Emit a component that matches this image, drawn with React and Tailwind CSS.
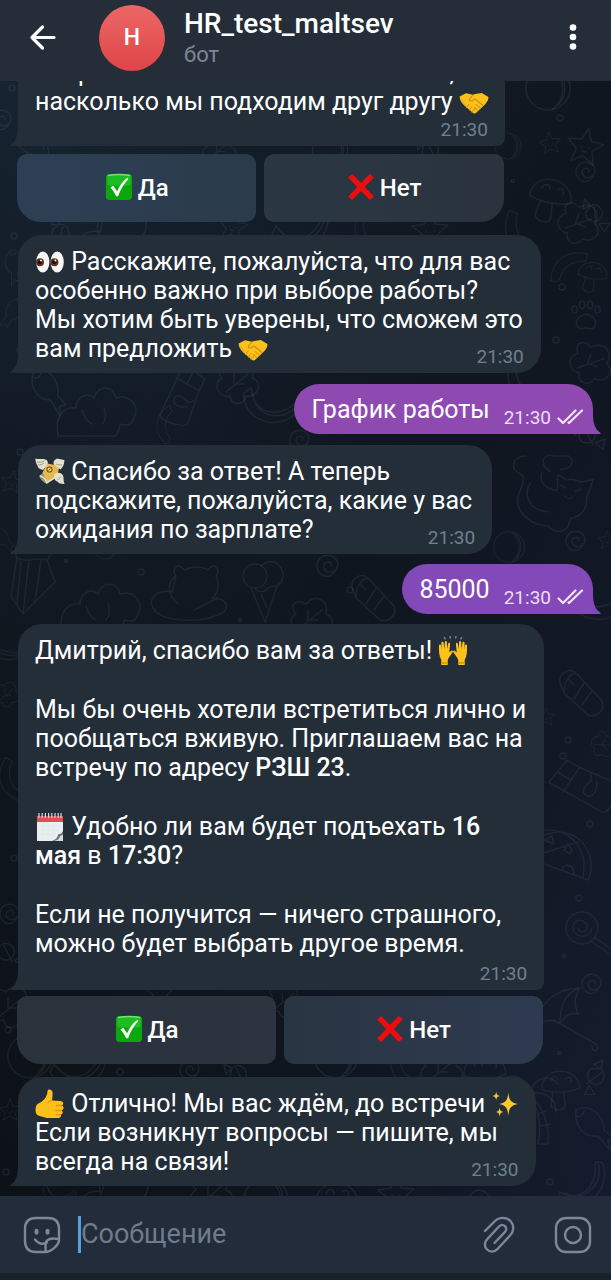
import React from "react";

/* ---------- emoji drawings ---------- */

function Emoji({ label, children, className = "h-[30px] w-[30px]" }) {
  return (
    <svg role="img" aria-label={label} viewBox="0 0 30 30" className={`-mt-[5px] -mb-[3px] inline-block shrink-0 align-middle ${className}`}>
      {children}
    </svg>
  );
}

function Handshake() {
  return (
    <Emoji label="Рукопожатие">
      <path d="M0.6 9.500 7 6.200l7 1.600 2.300-.9 6.500-1 6.600 4.200c.4 3-2.300 6.300-4.500 8.500L17.500 25.600c-1.500 1.300-3 1.100-4-.2L4.800 18C2.200 15.400.8 12.500.6 9.500z" fill="#fcc21b" />
      <path d="M14 7.800 10.500 12c-.7 1.900 1.700 2.700 3.400 1.300l2-1.400 7.800 6.300" fill="none" stroke="#c98a10" strokeWidth="1.100" strokeLinecap="round" />
      <path d="M7.500 20.500l2.600-3.300M10.300 22.800l2.700-3.300M13 25l2.600-3.200M17.200 17.600l4.400 3.600M15.500 20.500l3.400 2.900" stroke="#d9960f" strokeWidth="1.100" strokeLinecap="round" />
      <path d="M1 12c3.500 1.500 4 4.500 5 6.800" fill="none" stroke="#e8a413" strokeWidth="1" />
    </Emoji>
  );
}

function Eyes() {
  return (
    <Emoji label="Глаза">
      <ellipse cx="7.800" cy="15" rx="6.600" ry="10.500" fill="#f7f7f7" />
      <ellipse cx="22.200" cy="15" rx="6.600" ry="10.500" fill="#f7f7f7" />
      <circle cx="5" cy="15.200" r="4" fill="#5f3322" />
      <circle cx="19.400" cy="15.200" r="4" fill="#5f3322" />
      <circle cx="4.800" cy="15.200" r="2" fill="#17100d" />
      <circle cx="19.200" cy="15.200" r="2" fill="#17100d" />
      <circle cx="6" cy="13.500" r=".9" fill="#fff" />
      <circle cx="20.400" cy="13.500" r=".9" fill="#fff" />
    </Emoji>
  );
}

function WingedMoney() {
  return (
    <Emoji label="Деньги с крыльями">
      <path d="M8.500 15.500 4 18.800c1 3.700 4 6.500 7.800 8.200L22 20z" fill="#8b9476" />
      <path d="M12.500 6.500 24.500 9 22 20.500 12 25 7.500 15.500z" fill="#e3b94f" />
      <path d="M5 19c3.500.5 5.500 3.500 6.800 6.700l9-5.500" fill="none" stroke="#e5e2cf" strokeWidth="1.500" />
      <circle cx="14.500" cy="12.500" r="4.200" fill="#f1cd62" />
      <circle cx="14.500" cy="12.500" r="2.600" fill="none" stroke="#7b5a20" strokeWidth="1.200" />
      <path d="M13.500 13.500l2-2" stroke="#7b5a20" strokeWidth="1" />
      <path d="M.5 1.500c4 1.300 8-.4 11 1.500 1.700 1.200 1.700 3.500.5 5.200l-4 4.800C4.500 12 2.500 10.500 2.500 8.500 1 6.500.3 4 .5 1.500zM29.500 3c-3.500-.2-6.500-2-9-.6-2 1.100-2.300 3.300-1.700 5l6.700 5c2.200-1.700 3.800-5.200 4-9.400zM19 17.500c3.300-2.700 7-2 8.700.6 1.500 2.400.3 6.200 2 8.900-3.700 0-6.200-.6-7.200-2.400-2.700-.5-3.500-3.600-3.500-7.100z" fill="#e5e0cb" />
      <path d="M3 8c2.500.1 4.300-.6 6-2M2 5c2.500.4 5 .1 7-.7M21 7c2 1 4 1.200 6 .7M22.500 22.500c1.500-.4 2.700-1.400 3.300-3" stroke="#a39c84" fill="none" />
    </Emoji>
  );
}

function RaisedHands() {
  return (
    <Emoji label="Поднятые руки">
      <path d="M6.200 1l1.300 2.500M12 0l.5 2.500M18 0l-.5 2.500M23.800 1l-1.300 2.500" stroke="#72818d" strokeWidth="1.500" />
      <path id="raised-left" d="M1 9.500c.1-1.500 1.900-1.500 2.100 0L3.600 14 3.400 7c0-1.600 2-1.700 2.200-.1L6.500 13 6.800 6.200c.1-1.500 2-1.500 2.100 0L9.100 13l1-5.300c.4-1.500 2.200-1.100 2 .4l-.8 8.400 1.800-1.700c1.300-1 2.300.2 1.500 1.400L11 21.500c-.6 1.200-1.300 2-1.300 3V29H3.300v-5C1.200 20.500.7 15 1 9.500z" fill="#fcc21b" />
      <use href="#raised-left" transform="translate(30 0) scale(-1 1)" />
      <path d="M3.300 27h6.400M20.300 27h6.400" stroke="#e39a12" strokeWidth="2" />
    </Emoji>
  );
}

function Calendar() {
  return (
    <Emoji label="Календарь">
      <path d="M2 4h26v25H2z" fill="#eceff0" />
      <path d="M2 4h26v6H2z" fill="#d75257" />
      <path d="M4 1v5M7.200 1v5M10.400 1v5M13.600 1v5M16.800 1v5M20 1v5M23.200 1v5M26 1v5" stroke="#cfd8dc" strokeWidth="1.200" />
      <path d="M5 14h20M5 18h20M5 22h16M8 11v16M13 11v16M18 11v14" stroke="#dfe4e7" strokeWidth=".8" />
      <path d="M28 19v10H16.500c5-1.500 6-3.500 6.500-6.500 2.500-.3 4-1.500 5-3.500z" fill="#65727b" />
      <path d="M28 22v7h-9c4-1 5.500-2.500 6-5 1.500-.3 2.500-1 3-2z" fill="#d4dade" />
    </Emoji>
  );
}

function ThumbsUp() {
  return (
    <Emoji label="Большой палец вверх">
      <path d="M13.500.6c2.200-.6 4 .8 4.100 3.200.1 2.600-.4 5.200-.5 7.700l8.200.4c3.300.1 3.800 3.700 1.500 4.600 2.600.8 2.200 4.300-.3 4.900 2 1 1.400 3.800-.9 4.200 1.100 1.500.1 3.300-2 3.400H14c-3 0-5.200-1-7.500-1.600-3.800-.7-5.800-2.200-5.900-5.700-.2-3.200.5-6.100 2.900-7.100C8 12.400 11 9 12.100 5c.4-1.600.2-3.700 1.400-4.400z" fill="#fcc21b" />
      <path d="M26.500 16.500h-5.200M26.300 21.500h-5.400M25.300 25.600h-4.300M16.700 11.600c-1.500.2-3 .8-3.700 1.700" stroke="#df9810" strokeWidth="1.300" strokeLinecap="round" fill="none" />
    </Emoji>
  );
}

function Sparkles() {
  return (
    <Emoji label="Искры" className="h-[28px] w-[28px]">
      <path d="M17.500 3c1 8.200 2.500 10.500 10.500 12-8 1.500-9.500 4-10.500 12.500C16.500 19 15 16.500 7.500 15 15 13.500 16.500 11.200 17.500 3z" fill="#fdc72e" />
      <path d="M4.500 1.500c.4 3.300 1.300 4.300 4.200 4.800-2.900.5-3.800 1.500-4.200 5-.4-3.500-1.300-4.500-4.200-5 2.900-.5 3.800-1.500 4.200-4.800zM8.200 19c.4 3.200 1.400 4 4.100 4.500-2.700.5-3.700 1.500-4.100 5-.4-3.500-1.400-4.500-4.100-5 2.700-.5 3.700-1.300 4.100-4.500z" fill="#f6c445" />
    </Emoji>
  );
}

function CheckMark() {
  return (
    <Emoji label="Галочка" className="h-[28px] w-[28px]">
      <rect x="1" y="1" width="28" height="28" rx="4" fill="#0aa80a" />
      <rect x="2.500" y="1.500" width="25" height="12" rx="3" fill="#1cbd22" />
      <path d="M3 2.800c7-1.300 17-1.300 24 0" stroke="#74e479" strokeWidth="1.500" fill="none" />
      <path d="M5.800 15.500l3-1.800 4.200 5.800C15.500 13.500 19 8.800 24 5l1 1.500c-5 5.500-8.500 11.500-11 18.500h-2c-1.500-3.500-3.500-6.500-6.200-9.500z" fill="#fff" />
    </Emoji>
  );
}

function CrossMark() {
  return (
    <Emoji label="Крестик" className="h-[28px] w-[28px]">
      <path d="M5.500 1 15 10.600 24.500 1l4.300 3.800L19 15l9.800 10.200-4.300 3.800L15 19.400 5.500 29l-4.300-3.800L11 15 1.200 4.800z" fill="#ee0c0c" />
    </Emoji>
  );
}

/* ---------- wallpaper ---------- */

const SHAPES = {
  star: <path d="M0-18 5-6l13 1L8 4l4 13L0 10-11 17-8 4-18-4-5-6zM-4 1v1M4 1v1M-2 5q2 2 4 0" />,
  planet: (
    <g>
      <circle r="22" />
      <path d="M4-21C18-8 18 10 5 21M10-18c9 10 9 26 0 35" />
    </g>
  ),
  spiral: <path d="M7 4C2 14-11 9-10-1-9-12 7-13 9-2 9 6-2 9-4 1-4-5 4-5 3 0" />,
  ring: <circle r="3" />,
  dot: <circle r="1.500" />,
  cone: (
    <g>
      <circle cx="-8" cy="-14" r="12" />
      <path d="M-2-24C10-36 26-20 18-8 12 0 8-6 5-2 0 4-6 2-8-2M-12-2 2 32 14-4M-2 4l6 14" />
    </g>
  ),
  popcorn: <path d="M-16-14c-4-8 4-14 10-10 2-8 14-6 14 0 8-2 12 6 6 12L22 10-10 42-22 24zM-16-14C-6-8 4-16 14-12M-10 42-4-12M-16 32-12-10M2 30l6-42" />,
  bush: <path d="M-38 28c-4-20 6-30 18-28 0-12 12-16 18-10 4-14 20-12 22 0 14-4 24 8 18 20-2 8-8 8-14 6 0 6-2 8-4 12zM-14 2c2 8 6 12 10 14M8 0c2 6 2 12-2 16" />,
  bear: <path d="M-14-20c-6-8 4-14 8-6 8-4 18-4 24 0 4-8 14-2 8 6 4 10 2 18-4 22 12 0 18 6 12 14C14 28-22 26-34 16-46 4-32-8-18-4-16-10-16-14-14-20zM-12 8C-24-2-22-16-14-20M4 14 28 2" />,
  cat: <path d="M-30-26c-14 2-14 16-4 18 8 2 4 12 2 22-2 18 18 28 34 26 12 10 22 0 20-10 12-4 16-12 14-24l4-18-12 4c-6-2-10-2-14 0l-10-4 2 16c-12 0-20-6-18-16M-4-14C-16-20-14-32-2-30l14-2c8 4 4 14-6 14M8-2l6 2M24 2l6-3M14 8q4 4 8 0M-22 0c-6 14 4 28 22 26" />,
  paw: <path d="M-9 8C-12 0-4-3 0-4c4 1 12 4 9 12-3 5-6 2-9 2s-6 3-9-2zM-11-5c-4 0-4-6-1-7s5 6 1 7zM-4-9c-4-1-3-8 0-8s4 7 0 8zM4-9c-4-1-3-8 0-8s4 7 0 8zM11-5c-4-1-2-8 1-7s3 7-1 7z" />,
  hook: <path d="M-6-32c-10 24-4 50 28 58 6-8 2-14-6-16C4 2 0-14 4-28z" />,
  torch: <path d="M-22-12C-24-22-12-28-6-22L20 6c4 8-6 18-14 14L-18-2zM-6-22C-14-20-18-12-18-2M2-12-8 4M10-4 0 10M-14-16l6 6" />,
  tube: <path d="M-30 8-18-18-4-14 34-8c6 0 4 30-4 32zM-4-14-14 14M-24-4l14 4M8-10c8 8-6 10-2 20 8 6 14-4 10-14" />,
  pizza: <path d="M-30 18C-34-22 20-36 34 4 36 14 36 20 32 28L-28 6M-30-14C-12-30 24-22 28 10 28 16 28 22 27 26M-28 6C-10 6-10-16-28-14M-28 6 22-10M-12-12l8-4 2 8zM8-2l4-6 4 6-2 4zM6 18c2-8 12-6 12 4" />,
  lolly: (
    <g>
      <circle r="16" />
      <path d="M10 0C8 12-10 10-9-1-8-11 6-9 5 0 4 5-4 5-4 0M13 10l24 16M10 14l24 16" />
    </g>
  ),
  umbrella: <path d="M-30 8C-28-14-10-30 14-30 8-20 8-14 12-4 4-6-2-2-6 6-14 0-22 2-30 8zM-12 2 30 26c6 6-4 10-4 2M14-30C0-26-6-14-6 6" />,
  fish: <path d="M-20-18C-6-26 8-12 8 2l10 8-6 2 2 10-12-14C-12 10-22-2-20-18zM-14-14h1M-20-12c6 2 8-2 8-6" />,
  leaf: <path d="M-4-14C6-26 20-16 16-4 28 0 22 16 10 14c-2 10-16 10-16 0-12 2-18-12-8-18-8-8 0-16 10-10zM-10 10 12-8M-2 2V-8M0 2h8" />,
  candy: <path d="M-8-6c6-6 16 0 14 8-2 8-14 8-16 0zM-8-6l-8-4 2 10zM6 8l8 6 2-10zM-4-6 4 10" />,
  banana: <path d="M-24 0C-12 18 10 18 22-8l6 4C24 24-14 34-28 8zM-20 4C-6 22 16 16 24-4" />,
  mushroom: <path d="M-20 4C-22-22 20-24 22 2 10 8-8 8-20 4zM-8 6l-2 16c4 6 14 6 16 0L4 6M-10-6c2-6 8-6 8 0M6-8c4-4 8 0 6 4" />,
  palm: <path d="M0 0c-16-10-28-4-30 8M0 0c-14 0-20 12-16 22M0 0C-4-18-18-22-28-14M0 0C4-18 20-20 28-10M0 0c14-4 26 4 26 18M0 0c8 14 12 34 8 50h10C20 30 12 12 0 0M8 20l8-3M10 32l10-2" />,
};

const DOODLES = [
  ["planet", 548, 88], ["star", 585, 146, 12], ["star", 550, 143, -8, 0.6], ["ring", 560, 118], ["planet", 508, 146, 0, 0.6],
  ["spiral", 586, 172], ["mushroom", 550, 196, 14], ["leaf", 578, 222, 20], ["candy", 596, 214, 20], ["dot", 513, 181], ["hook", 514, 236, 0, 0.8],
  ["hook", 566, 262, 80, 0.7], ["ring", 562, 287], ["mushroom", 592, 274, 10, 0.7], ["paw", 586, 318], ["ring", 556, 340], ["leaf", 590, 362, 20],
  ["banana", 536, 380, 30], ["candy", 589, 435, 0], ["cat", 552, 486, 8], ["planet", 509, 547, 0, 0.7], ["spiral", 576, 541], ["star", 607, 540, 0, 0.5],
  ["hook", 600, 612, -70, 0.9], ["ring", 568, 740], ["torch", 582, 695], ["star", 546, 717, 0, 0.5], ["ring", 563, 756], ["leaf", 603, 744, 40, 0.6],
  ["tube", 580, 782, 14], ["ring", 590, 824], ["pizza", 556, 852], ["ring", 579, 898], ["lolly", 582, 928], ["dot", 564, 956], ["spiral", 592, 984],
  ["umbrella", 566, 1018], ["dot", 559, 1053], ["mushroom", 560, 1086, 0, 0.9], ["candy", 596, 1078, 80], ["palm", 530, 1094], ["fish", 596, 1128], ["banana", 580, 1180, -30], ["ring", 550, 1182],
  ["spiral", 2, 120], ["ring", 12, 88], ["mushroom", 34, 150, 20, 0.7], ["leaf", 218, 150, 0, 0.8], ["planet", 330, 150, 0, 0.8], ["candy", 432, 150],
  ["star", 233, 226, 10, 0.8], ["bear", 118, 236], ["candy", 62, 234, 40], ["banana", 300, 226], ["hook", 360, 224, 30, 0.6], ["star", 430, 230], ["ring", 14, 236],
  ["fish", 14, 268, 40, 0.7], ["fish", 12, 314, 80, 0.7], ["fish", 50, 392, 10], ["ring", 20, 350], ["bush", 96, 408], ["tube", 186, 392, 100, 0.9], ["leaf", 236, 382], ["banana", 272, 400, 30],
  ["ring", 20, 452], ["star", 12, 482, 10, 0.6], ["fish", 4, 540, 0, 0.6], ["spiral", 300, 440], ["hook", 162, 424, 30, 0.6],
  ["popcorn", 33, 572], ["bush", 100, 604], ["bear", 190, 596], ["cone", 263, 590], ["ring", 141, 572], ["dot", 66, 561], ["dot", 240, 620], ["spiral", 328, 566, 0, 1.1], ["ring", 350, 590], ["leaf", 310, 618], ["torch", 374, 600], ["planet", 106, 546, 0, 0.6],
  ["banana", 4, 640, 60, 0.8], ["leaf", 6, 694, 0, 0.6], ["hook", 6, 780, 10, 0.7], ["ring", 14, 858], ["spiral", 10, 914], ["candy", 8, 952], ["leaf", 10, 1006], ["ring", 8, 1030], ["planet", 30, 1056],
  ["banana", 78, 1064], ["star", 160, 992, 0, 0.8], ["spiral", 190, 1070], ["planet", 336, 1056], ["candy", 240, 1074], ["leaf", 284, 1000, 0, 0.8], ["leaf", 440, 1070], ["mushroom", 484, 1072], ["ring", 120, 1072], ["hook", 398, 1070, 0, 0.7],
  ["star", 10, 1110, 0, 0.6], ["ring", 6, 1172], ["bear", 120, 1196], ["banana", 60, 1190, 20, 0.6], ["leaf", 210, 1194], ["planet", 266, 1200], ["mushroom", 336, 1200], ["star", 396, 1194], ["bush", 470, 1210],
];

function Wallpaper() {
  return (
    <div aria-hidden="true" className="absolute inset-0 -z-10 overflow-hidden bg-linear-to-br from-[#162330] via-[#0f161f] to-[#141b2c]">
      <div className="absolute inset-0 bg-linear-to-tr from-[#0d1218] via-transparent to-transparent" />
      <svg viewBox="0 81 611 1115" preserveAspectRatio="xMinYMin slice" className="absolute inset-0 h-full w-full" fill="none" stroke="#7d93a8" strokeOpacity=".12" strokeWidth="1.500" strokeLinecap="round" strokeLinejoin="round">
        {DOODLES.map(([shape, x, y, angle = 0, size = 1], i) => (
          <g key={i} transform={`translate(${x} ${y}) rotate(${angle}) scale(${size})`}>
            {SHAPES[shape]}
          </g>
        ))}
      </svg>
    </div>
  );
}

/* ---------- chat pieces ---------- */

function Time({ children }) {
  return <time className="absolute right-[17px] bottom-[6px] text-[19px] leading-5 text-[#70808d]">{children}</time>;
}

function Incoming({ time, className = "pt-3 pr-[18px] pb-2.5 rounded-[24px]", children }) {
  return (
    <article className={`relative ml-[18px] w-fit rounded-bl-none bg-[#232e39] pl-[17px] text-[25px] leading-[29px] whitespace-nowrap text-white ${className}`}>
      <svg aria-hidden="true" viewBox="0 0 9 20" className="absolute bottom-0 -left-2 h-5 w-[9px]" fill="#232e39">
        <path d="M9 0v20H1c-1 0-1-1 0-1.500C6 15 8 9 8 0z" />
      </svg>
      {children}
      <Time>{time}</Time>
    </article>
  );
}

function Outgoing({ time, color, tail, children }) {
  return (
    <article className={`relative mr-[18px] flex h-[50px] w-fit items-center self-end rounded-[25px] rounded-br-none pr-2.5 pl-[17px] text-white ${color}`}>
      <svg aria-hidden="true" viewBox="0 0 9 20" className={`absolute -right-2 bottom-0 h-5 w-[9px] ${tail}`}>
        <path d="M0 0v20h8c1 0 1-1 0-1.500C3 15 1 9 1 0z" />
      </svg>
      <p className="pt-0.5 text-[25px] leading-[30px] whitespace-nowrap">{children}</p>
      <time className="mt-[18px] ml-[14px] text-[19px] leading-5 text-[#efdcf8]">{time}</time>
      <svg role="img" aria-label="Прочитано" viewBox="0 0 26 16" className="mt-4 ml-1.5 h-4 w-[26px]" fill="none" stroke="#f3e3fb" strokeWidth="2.200" strokeLinecap="round" strokeLinejoin="round">
        <path d="M1.500 9.500l4.500 4.500L18.500 1.500M11.500 13.500l.5.500L25 1.500" />
      </svg>
    </article>
  );
}

function Replies({ yes, no, className }) {
  const base = "flex h-[68px] items-center justify-center gap-[5px] rounded-[10px] text-[24px] font-medium text-white";
  return (
    <div className={`-ml-px grid grid-cols-2 gap-2 pr-px pl-[18px] ${className}`}>
      <button type="button" className={`${base} rounded-bl-[24px] ${yes}`}>
        <CheckMark />
        Да
      </button>
      <button type="button" className={`${base} rounded-br-[24px] ${no}`}>
        <CrossMark />
        Нет
      </button>
    </div>
  );
}

/* ---------- page ---------- */

export default function App() {
  return (
    <div className="flex h-screen flex-col overflow-hidden bg-[#18212b] font-[Roboto,sans-serif]">
      <header className="z-10 flex h-[81px] shrink-0 items-start bg-[#252d39] text-white">
        <button type="button" aria-label="Назад" className="mt-[21px] ml-[26px] h-8 w-8">
          <svg viewBox="0 0 32 32" className="h-8 w-8" fill="none" stroke="currentColor" strokeWidth="3.200" strokeLinecap="round" strokeLinejoin="round">
            <path d="M28 16.500H6M16.500 6 6 16.500 16.500 27" />
          </svg>
        </button>
        <div className="mt-[5px] ml-[41px] flex h-[66px] w-[66px] items-center justify-center rounded-full bg-linear-to-b from-[#ec6667] to-[#df4447] text-[23px] font-medium">
          H
        </div>
        <div className="mt-2 ml-[19px] flex-1">
          <h1 className="text-[28px] leading-[32px] font-medium">HR_test_maltsev</h1>
          <p className="text-[22px] leading-[30px] text-[#7c8897]">бот</p>
        </div>
        <button type="button" aria-label="Меню" className="mt-[21px] mr-[22px] h-8 w-8">
          <svg viewBox="0 0 32 32" className="h-8 w-8" fill="currentColor">
            <circle cx="16" cy="6.500" r="3.300" />
            <circle cx="16" cy="16" r="3.300" />
            <circle cx="16" cy="25.500" r="3.300" />
          </svg>
        </button>
      </header>

      <main className="relative isolate flex min-h-0 flex-1 flex-col justify-end overflow-hidden pb-2.5">
        <Wallpaper />

        <section className="w-fit">
          <Incoming time="21:30" className="pt-3 pr-4 pb-[30px] rounded-t-[24px] rounded-br-[8px]">
            <p>
              вопросов и вместе сможем понять,
              <br />
              насколько мы подходим друг другу <Handshake />
            </p>
          </Incoming>
          <Replies
            className="mt-2"
            yes="bg-linear-to-r from-[#2c4055] to-[#2b3b4b]"
            no="bg-linear-to-r from-[#2a3844] to-[#2a333e]"
          />
        </section>

        <div className="mt-[13px]">
          <Incoming time="21:30">
            <p>
              <Eyes /> Расскажите, пожалуйста, что для вас
              <br />
              особенно важно при выборе работы?
              <br />
              Мы хотим быть уверены, что сможем это
              <br />
              вам предложить <Handshake />
            </p>
          </Incoming>
        </div>

        <div className="mt-[11px] flex flex-col">
          <Outgoing time="21:30" color="bg-[#8e4ab1]" tail="fill-[#8e4ab1]">
            График работы
          </Outgoing>
        </div>

        <div className="mt-[11px]">
          <Incoming time="21:30" className="pt-3 pr-5 pb-2.5 rounded-[24px]">
            <p>
              <WingedMoney /> Спасибо за ответ! А теперь
              <br />
              подскажите, пожалуйста, какие у вас
              <br />
              ожидания по зарплате?
            </p>
          </Incoming>
        </div>

        <div className="mt-2.5 flex flex-col">
          <Outgoing time="21:30" color="bg-[#8349b8]" tail="fill-[#8349b8]">
            85000
          </Outgoing>
        </div>

        <section className="mt-2.5 w-fit">
          <Incoming time="21:30" className="pt-3 pr-[18px] pb-8 rounded-t-[24px] rounded-br-[8px]">
            <div className="flex flex-col gap-[30px]">
              <p>
                Дмитрий, спасибо вам за ответы! <RaisedHands />
              </p>
              <p>
                Мы бы очень хотели встретиться лично и
                <br />
                пообщаться вживую. Приглашаем вас на
                <br />
                встречу по адресу <b className="font-medium">РЗШ 23</b>.
              </p>
              <p>
                <Calendar /> Удобно ли вам будет подъехать <b className="font-medium">16</b>
                <br />
                <b className="font-medium">мая</b> в <b className="font-medium">17:30</b>?
              </p>
              <p>
                Если не получится — ничего страшного,
                <br />
                можно будет выбрать другое время.
              </p>
            </div>
          </Incoming>
          <Replies
            className="mt-1.5"
            yes="bg-linear-to-r from-[#2a323c] to-[#2b343f]"
            no="bg-linear-to-r from-[#2a3542] to-[#2e3a50]"
          />
        </section>

        <div className="mt-[13px]">
          <Incoming time="21:30" className="pt-3 pr-4 pb-2.5 rounded-[24px]">
            <p>
              <ThumbsUp /> Отлично! Мы вас ждём, до встречи <Sparkles />
              <br />
              Если возникнут вопросы — пишите, мы
              <br />
              всегда на связи!
            </p>
          </Incoming>
        </div>
      </main>

      <footer className="z-10 flex h-[77px] shrink-0 items-center bg-[#222c3a] pr-[19px] pl-[23px] text-[#7c8897]">
        <button type="button" aria-label="Стикеры" className="h-[38px] w-[38px]">
          <svg viewBox="0 0 38 38" className="h-[38px] w-[38px]" fill="none" stroke="currentColor" strokeWidth="2.400" strokeLinecap="round" strokeLinejoin="round">
            <path d="M36 24V13C36 6 32 2 25 2H13C6 2 2 6 2 13v12c0 7 4 11 11 11h9.500C28 36 36 29 36 24c-1-1.500-3-1.500-6-1.500-5 0-8 2.500-7.500 7.500.2 2 .2 4 0 6" />
            <path d="M12 23.500c3.500 4.500 8 5 12 3" />
            <path d="M13.500 14.800v2M24.500 14.800v2" strokeWidth="4" />
          </svg>
        </button>
        <input
          type="text"
          aria-label="Сообщение"
          placeholder="Сообщение"
          className="ml-[17px] h-[37px] min-w-0 flex-1 border-l-[3px] border-[#5a9fd6] bg-transparent text-[27px] text-white outline-none placeholder:text-[#6f7c8b]"
        />
        <button type="button" aria-label="Прикрепить файл" className="h-[38px] w-[38px]">
          <svg viewBox="0 0 38 38" className="h-[38px] w-[38px]" fill="none" stroke="currentColor" strokeWidth="2.400" strokeLinecap="round">
            <path d="M5 15 14.500 5.500C19.500.5 26.500 1 30.500 5c4 4.500 3.500 10.500-.5 14.500L17.500 33c-3 3.200-7.500 3.500-10.500.5s-2.800-7.500.5-10.700L19 10.500c2-2 4.500-1.800 6-.3s1.700 4-.2 6L14.500 27" />
          </svg>
        </button>
        <button type="button" aria-label="Видеосообщение" className="ml-[36px] h-[38px] w-[38px]">
          <svg viewBox="0 0 38 38" className="h-[38px] w-[38px]" fill="none" stroke="currentColor" strokeWidth="2.400">
            <rect x="2" y="2" width="34" height="34" rx="10" />
            <circle cx="19" cy="19" r="8" />
          </svg>
        </button>
      </footer>
      <div className="h-[7px] shrink-0 bg-[#18212b]" />
    </div>
  );
}
